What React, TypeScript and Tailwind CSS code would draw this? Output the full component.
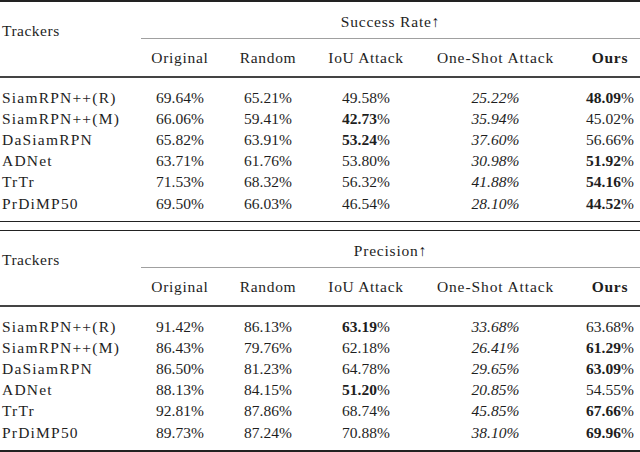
import React from 'react'

type Cell = { v: string; s?: 'b' | 'i' }

interface Row {
  name: string
  cells: Cell[]
}

const successRows: Row[] = [
  { name: 'SiamRPN++(R)', cells: [{ v: '69.64' }, { v: '65.21' }, { v: '49.58' }, { v: '25.22', s: 'i' }, { v: '48.09', s: 'b' }] },
  { name: 'SiamRPN++(M)', cells: [{ v: '66.06' }, { v: '59.41' }, { v: '42.73', s: 'b' }, { v: '35.94', s: 'i' }, { v: '45.02' }] },
  { name: 'DaSiamRPN', cells: [{ v: '65.82' }, { v: '63.91' }, { v: '53.24', s: 'b' }, { v: '37.60', s: 'i' }, { v: '56.66' }] },
  { name: 'ADNet', cells: [{ v: '63.71' }, { v: '61.76' }, { v: '53.80' }, { v: '30.98', s: 'i' }, { v: '51.92', s: 'b' }] },
  { name: 'TrTr', cells: [{ v: '71.53' }, { v: '68.32' }, { v: '56.32' }, { v: '41.88', s: 'i' }, { v: '54.16', s: 'b' }] },
  { name: 'PrDiMP50', cells: [{ v: '69.50' }, { v: '66.03' }, { v: '46.54' }, { v: '28.10', s: 'i' }, { v: '44.52', s: 'b' }] },
]

const precisionRows: Row[] = [
  { name: 'SiamRPN++(R)', cells: [{ v: '91.42' }, { v: '86.13' }, { v: '63.19', s: 'b' }, { v: '33.68', s: 'i' }, { v: '63.68' }] },
  { name: 'SiamRPN++(M)', cells: [{ v: '86.43' }, { v: '79.76' }, { v: '62.18' }, { v: '26.41', s: 'i' }, { v: '61.29', s: 'b' }] },
  { name: 'DaSiamRPN', cells: [{ v: '86.50' }, { v: '81.23' }, { v: '64.78' }, { v: '29.65', s: 'i' }, { v: '63.09', s: 'b' }] },
  { name: 'ADNet', cells: [{ v: '88.13' }, { v: '84.15' }, { v: '51.20', s: 'b' }, { v: '20.85', s: 'i' }, { v: '54.55' }] },
  { name: 'TrTr', cells: [{ v: '92.81' }, { v: '87.86' }, { v: '68.74' }, { v: '45.85', s: 'i' }, { v: '67.66', s: 'b' }] },
  { name: 'PrDiMP50', cells: [{ v: '89.73' }, { v: '87.24' }, { v: '70.88' }, { v: '38.10', s: 'i' }, { v: '69.96', s: 'b' }] },
]

const cols = 'grid grid-cols-[141px_78px_98px_98px_161px_64px]'

function Value({ cell }: { cell: Cell }) {
  if (cell.s === 'b') {
    return (
      <span>
        <span className="font-bold">{cell.v}</span>%
      </span>
    )
  }
  if (cell.s === 'i') return <span className="italic">{cell.v}%</span>
  return <span>{cell.v}%</span>
}

function ResultTable({ title, rows }: { title: string; rows: Row[] }) {
  return (
    <div>
      {/* header */}
      <div className={`${cols} tracking-[0.7px]`}>
        <div className="row-span-2 pl-[2px] pt-[19px] leading-[20px] tracking-[0.5px]">Trackers</div>
        <div className="col-span-5 h-[37px] border-b border-[#a0a0a0] pt-[10px] text-center leading-[20px] tracking-[0.8px]">
          {title}↑
        </div>
        <div className="h-[37px] pt-[9px] text-center leading-[20px]">Original</div>
        <div className="h-[37px] pt-[9px] text-center leading-[20px]">Random</div>
        <div className="h-[37px] pt-[9px] text-center leading-[20px]">IoU Attack</div>
        <div className="h-[37px] pt-[9px] text-center leading-[20px] tracking-[0.9px]">One-Shot Attack</div>
        <div className="h-[37px] pt-[9px] pl-[4px] text-center font-bold leading-[20px]">Ours</div>
      </div>
      <div className="h-[1.5px] bg-[#444]" />
      {/* body */}
      <div className="pt-[9px] pb-[7px]">
        {rows.map((r) => (
          <div key={r.name} className={`${cols} h-[21.2px] items-center leading-[21px]`}>
            <div className="pl-[2px] tracking-[1.2px]">{r.name}</div>
            {r.cells.map((c, i) => (
              <div key={i} className={i === 4 ? 'pl-[4px] text-center' : 'text-center'}>
                <Value cell={c} />
              </div>
            ))}
          </div>
        ))}
      </div>
    </div>
  )
}

export default function App() {
  return (
    <div
      className="w-[640px] h-[452px] overflow-hidden bg-white text-[15.5px] text-[#1e1e1e]"
      style={{ fontFamily: '"Liberation Serif", "DejaVu Serif", serif' }}
    >
      <div className="h-[2px] bg-[#222]" />
      <ResultTable title="Success Rate" rows={successRows} />
      <div className="h-[1.5px] bg-[#222]" />
      <div className="h-[7.5px]" />
      <div className="h-[1.5px] bg-[#222]" />
      <ResultTable title="Precision" rows={precisionRows} />
      <div className="h-[2px] bg-[#222]" />
    </div>
  )
}
